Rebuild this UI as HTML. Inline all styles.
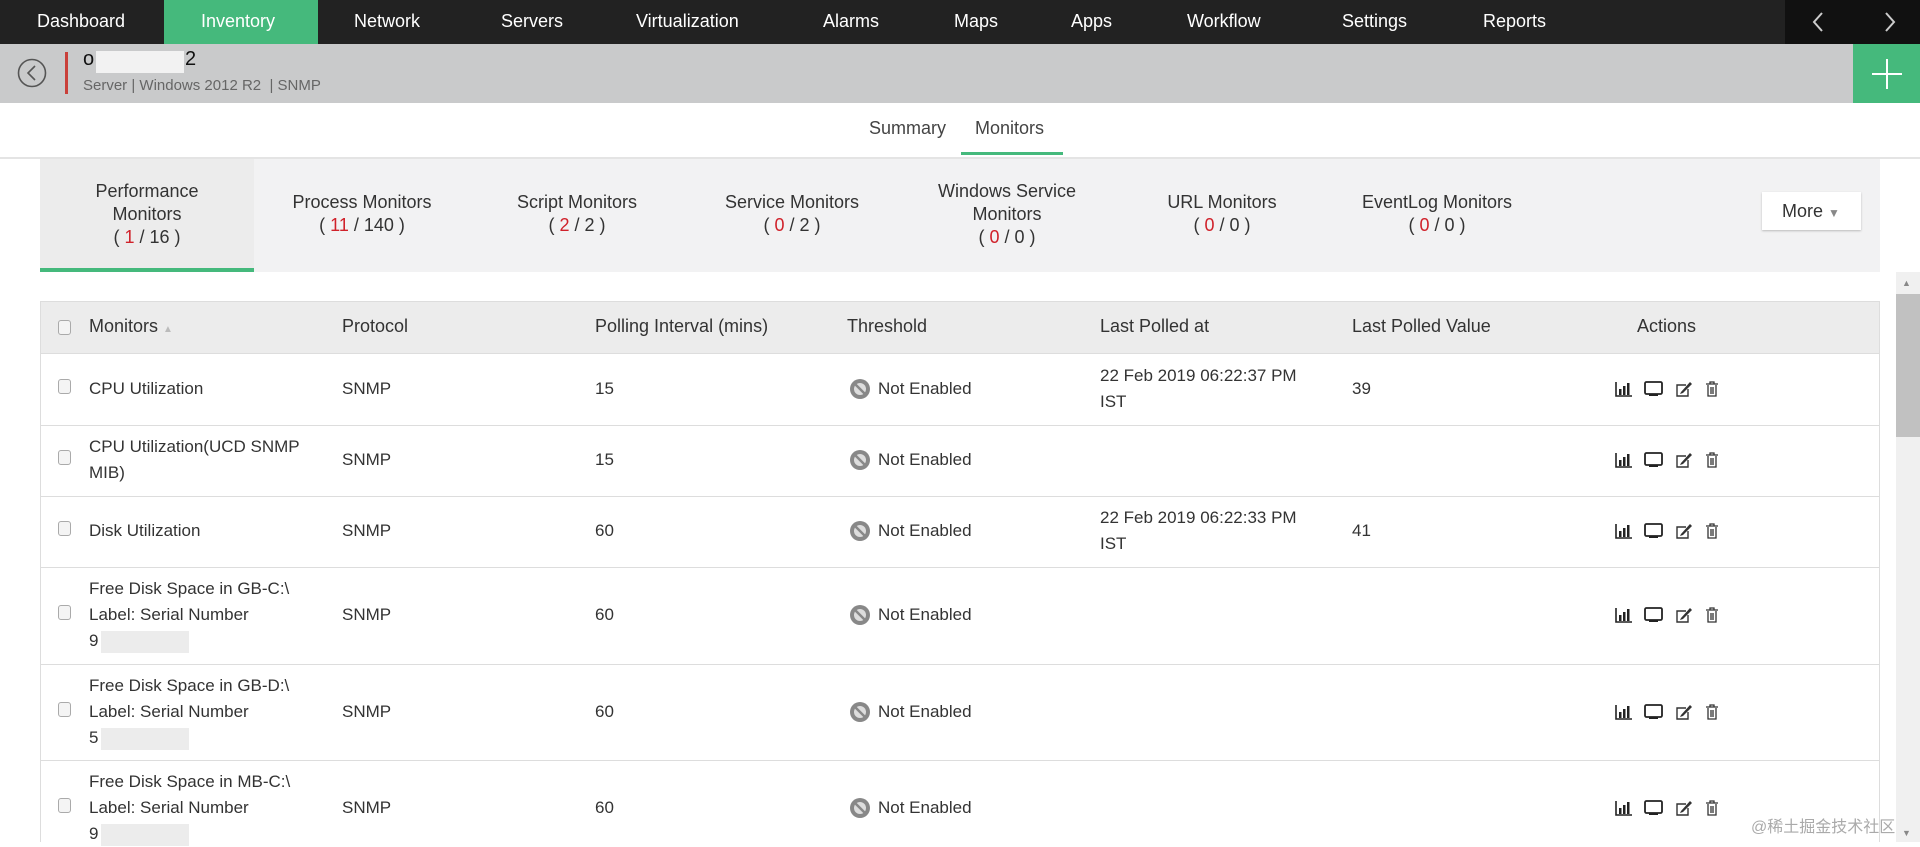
<!DOCTYPE html>
<html><head><meta charset="utf-8"><style>
*{margin:0;padding:0;box-sizing:border-box}
body{width:1920px;height:842px;overflow:hidden;background:#fff;font-family:"Liberation Sans","Noto Sans CJK SC",sans-serif;color:#333;position:relative}
.a{position:absolute;white-space:nowrap}
.nav{left:0;top:0;width:1920px;height:44px;background:#222}
.ni{top:0;height:44px;line-height:42px;color:#fff;font-size:18px}
.r{color:#d0212a}
.cat{font-size:18px;color:#333;text-align:center;line-height:23px}
.th{font-size:18px;color:#333;top:316px}
.td{font-size:17px;color:#333;line-height:26px}
.cb{width:13px;height:15px;border:1px solid #aaa;border-radius:3px;background:#f4f4f4}
.hl{left:40px;width:1840px;height:1px;background:#ddd}
.ne{width:20px;height:20px;border-radius:50%;border:3px solid #777;background:#ddd}
.ne:after{content:"";position:absolute;left:6px;top:-2px;width:2px;height:18px;background:#777;transform:rotate(-45deg);left:6px}
.bl{width:14px;height:12px;background:#fff;}
</style></head><body>
<div class="a nav"></div>
<div class="a" style="left:164px;top:0;width:154px;height:44px;background:#45b97c"></div>
<div class="a ni" style="left:37px">Dashboard</div>
<div class="a ni" style="left:201px">Inventory</div>
<div class="a ni" style="left:354px">Network</div>
<div class="a ni" style="left:501px">Servers</div>
<div class="a ni" style="left:636px">Virtualization</div>
<div class="a ni" style="left:823px">Alarms</div>
<div class="a ni" style="left:954px">Maps</div>
<div class="a ni" style="left:1071px">Apps</div>
<div class="a ni" style="left:1187px">Workflow</div>
<div class="a ni" style="left:1342px">Settings</div>
<div class="a ni" style="left:1483px">Reports</div>
<div class="a" style="left:1785px;top:0;width:135px;height:44px;background:#111"></div>
<svg class="a" style="left:1808px;top:10px" width="100" height="24"><path d="M14 3 L6 12 L14 21" stroke="#ccc" stroke-width="2" fill="none"/><path d="M78 3 L86 12 L78 21" stroke="#ccc" stroke-width="2" fill="none"/></svg>

<div class="a" style="left:0;top:44px;width:1920px;height:59px;background:#c9cacb"></div>
<svg class="a" style="left:16px;top:57px" width="32" height="32"><circle cx="16" cy="16" r="13.5" stroke="#555" stroke-width="1.6" fill="none"/><path d="M19 9 L12 16 L19 23" stroke="#555" stroke-width="1.6" fill="none"/></svg>
<div class="a" style="left:65px;top:52px;width:3px;height:42px;background:#c9403a"></div>
<div class="a" style="left:83px;top:48px;font-size:20px;color:#111">o</div>
<div class="a" style="left:96px;top:51px;width:88px;height:22px;background:#f2f2f2"></div>
<div class="a" style="left:185px;top:48px;font-size:20px;color:#111">2</div>
<div class="a" style="left:83px;top:77px;font-size:15px;color:#666">Server | Windows 2012 R2 &nbsp;| SNMP</div>
<div class="a" style="left:1853px;top:44px;width:67px;height:59px;background:#45b97c"></div>
<div class="a" style="left:1872px;top:73px;width:30px;height:2px;background:#fff"></div>
<div class="a" style="left:1886px;top:59px;width:2px;height:30px;background:#fff"></div>

<div class="a" style="left:869px;top:118px;font-size:18px;color:#444">Summary</div>
<div class="a" style="left:975px;top:118px;font-size:18px;color:#444">Monitors</div>
<div class="a" style="left:961px;top:152px;width:102px;height:3px;background:#45b97c"></div>
<div class="a" style="left:0;top:157px;width:1920px;height:2px;background:#e4e4e4"></div>

<div class="a" style="left:40px;top:159px;width:1840px;height:113px;background:#f2f2f3"></div>
<div class="a" style="left:40px;top:159px;width:214px;height:113px;background:#ececec"></div>
<div class="a" style="left:40px;top:268px;width:214px;height:4px;background:#45b97c"></div>
<div class="a cat" style="left:40px;width:214px;top:180px">Performance<br>Monitors<br>( <span class="r">1</span> / 16 )</div>
<div class="a cat" style="left:262px;width:200px;top:191px">Process Monitors<br>( <span class="r">11</span> / 140 )</div>
<div class="a cat" style="left:477px;width:200px;top:191px">Script Monitors<br>( <span class="r">2</span> / 2 )</div>
<div class="a cat" style="left:692px;width:200px;top:191px">Service Monitors<br>( <span class="r">0</span> / 2 )</div>
<div class="a cat" style="left:907px;width:200px;top:180px">Windows Service<br>Monitors<br>( <span class="r">0</span> / 0 )</div>
<div class="a cat" style="left:1122px;width:200px;top:191px">URL Monitors<br>( <span class="r">0</span> / 0 )</div>
<div class="a cat" style="left:1337px;width:200px;top:191px">EventLog Monitors<br>( <span class="r">0</span> / 0 )</div>
<div class="a" style="left:1762px;top:192px;width:99px;height:38px;background:#fff;box-shadow:0 1px 2px #bbb;font-size:18px;line-height:38px;padding-left:20px">More <span style="color:#888;font-size:12px">▼</span></div>

<div class="a" style="left:40px;top:301px;width:1840px;height:53px;background:#ececec;border:1px solid #ddd"></div>
<div class="a cb" style="left:58px;top:320px"></div>
<div class="a th" style="left:89px">Monitors <span style="color:#bbb;font-size:10px">▲</span></div>
<div class="a th" style="left:342px">Protocol</div>
<div class="a th" style="left:595px">Polling Interval (mins)</div>
<div class="a th" style="left:847px">Threshold</div>
<div class="a th" style="left:1100px">Last Polled at</div>
<div class="a th" style="left:1352px">Last Polled Value</div>
<div class="a th" style="left:1637px">Actions</div>
<div class="a" style="left:40px;top:354px;width:1px;height:488px;background:#ddd"></div>
<div class="a" style="left:1879px;top:354px;width:1px;height:488px;background:#ddd"></div>
<div class="a hl" style="top:425px"></div>
<div class="a hl" style="top:496px"></div>
<div class="a hl" style="top:567px"></div>
<div class="a hl" style="top:664px"></div>
<div class="a hl" style="top:760px"></div>

<!-- rows: center y -->
<div id="rows"></div>
<div class="a" style="left:1896px;top:272px;width:24px;height:570px;background:#f0f0f0"></div>
<div class="a" style="left:1896px;top:294px;width:24px;height:143px;background:#c1c1c1"></div>
<div class="a" style="left:1902px;top:278px;font-size:9px;color:#888">▲</div>
<div class="a" style="left:1902px;top:828px;font-size:9px;color:#888">▼</div>
<div class="a" style="left:1751px;top:813px;font-size:16px;color:#aaa">@稀土掘金技术社区</div>

<script>
var rows=[
[389,["CPU Utilization"],"15",["22 Feb 2019 06:22:37 PM","IST"],"39"],
[460,["CPU Utilization(UCD SNMP","MIB)"],"15",[],""],
[531,["Disk Utilization"],"60",["22 Feb 2019 06:22:33 PM","IST"],"41"],
[615,["Free Disk Space in GB-C:\\","Label: Serial Number","9"],"60",[],""],
[712,["Free Disk Space in GB-D:\\","Label: Serial Number","5"],"60",[],""],
[808,["Free Disk Space in MB-C:\\","Label: Serial Number","9"],"60",[],""]];
var h="";
var ic='<svg width="110" height="20"><path d="M2 3V17H18" stroke="#222" stroke-width="1.6" fill="none"/><rect x="5" y="10" width="2.5" height="6" fill="#222"/><rect x="9" y="7" width="2.5" height="9" fill="#222"/><rect x="13" y="4" width="2.5" height="12" fill="#222"/><rect x="31" y="3" width="17" height="12" rx="1.5" stroke="#222" stroke-width="1.8" fill="none"/><rect x="35" y="15" width="9" height="2" fill="#222"/><path d="M72 6H63V17H74V10" stroke="#333" stroke-width="1.4" fill="none"/><path d="M67 13L76 3L78 5L69 14L66 15Z" fill="#333"/><path d="M92 5H104M96 5V3H100V5M94 6V17H102V6M97 8V15M99 8V15" stroke="#333" stroke-width="1.3" fill="none"/></svg>';
rows.forEach(function(r){
 var y=r[0];var n=r[1].length;
 h+='<div class="a cb" style="left:58px;top:'+(y-10)+'px"></div>';
 h+='<div class="a td" style="left:89px;top:'+(y-n*13)+'px">'+r[1].join("<br>")+'</div>';
 if(n==3)h+='<div class="a" style="left:101px;top:'+(y+16)+'px;width:88px;height:22px;background:#ececec"></div>';
 h+='<div class="a td" style="left:342px;top:'+(y-13)+'px">SNMP</div>';
 h+='<div class="a td" style="left:595px;top:'+(y-13)+'px">'+r[2]+'</div>';
 h+='<svg class="a" style="left:848px;top:'+(y-12)+'px" width="24" height="24"><circle cx="12" cy="12" r="10" fill="#888"/><circle cx="12" cy="12" r="6" fill="#ddd"/><path d="M7 7L17 17" stroke="#888" stroke-width="2.5"/></svg>';
 h+='<div class="a td" style="left:878px;top:'+(y-13)+'px">Not Enabled</div>';
 if(r[3].length)h+='<div class="a td" style="left:1100px;top:'+(y-26)+'px">'+r[3].join("<br>")+'</div>';
 h+='<div class="a td" style="left:1352px;top:'+(y-13)+'px">'+r[4]+'</div>';
 h+='<div class="a" style="left:1614px;top:'+(y-10)+'px">'+ic+'</div>';
});
document.getElementById("rows").outerHTML=h;
</script>
</body></html>
